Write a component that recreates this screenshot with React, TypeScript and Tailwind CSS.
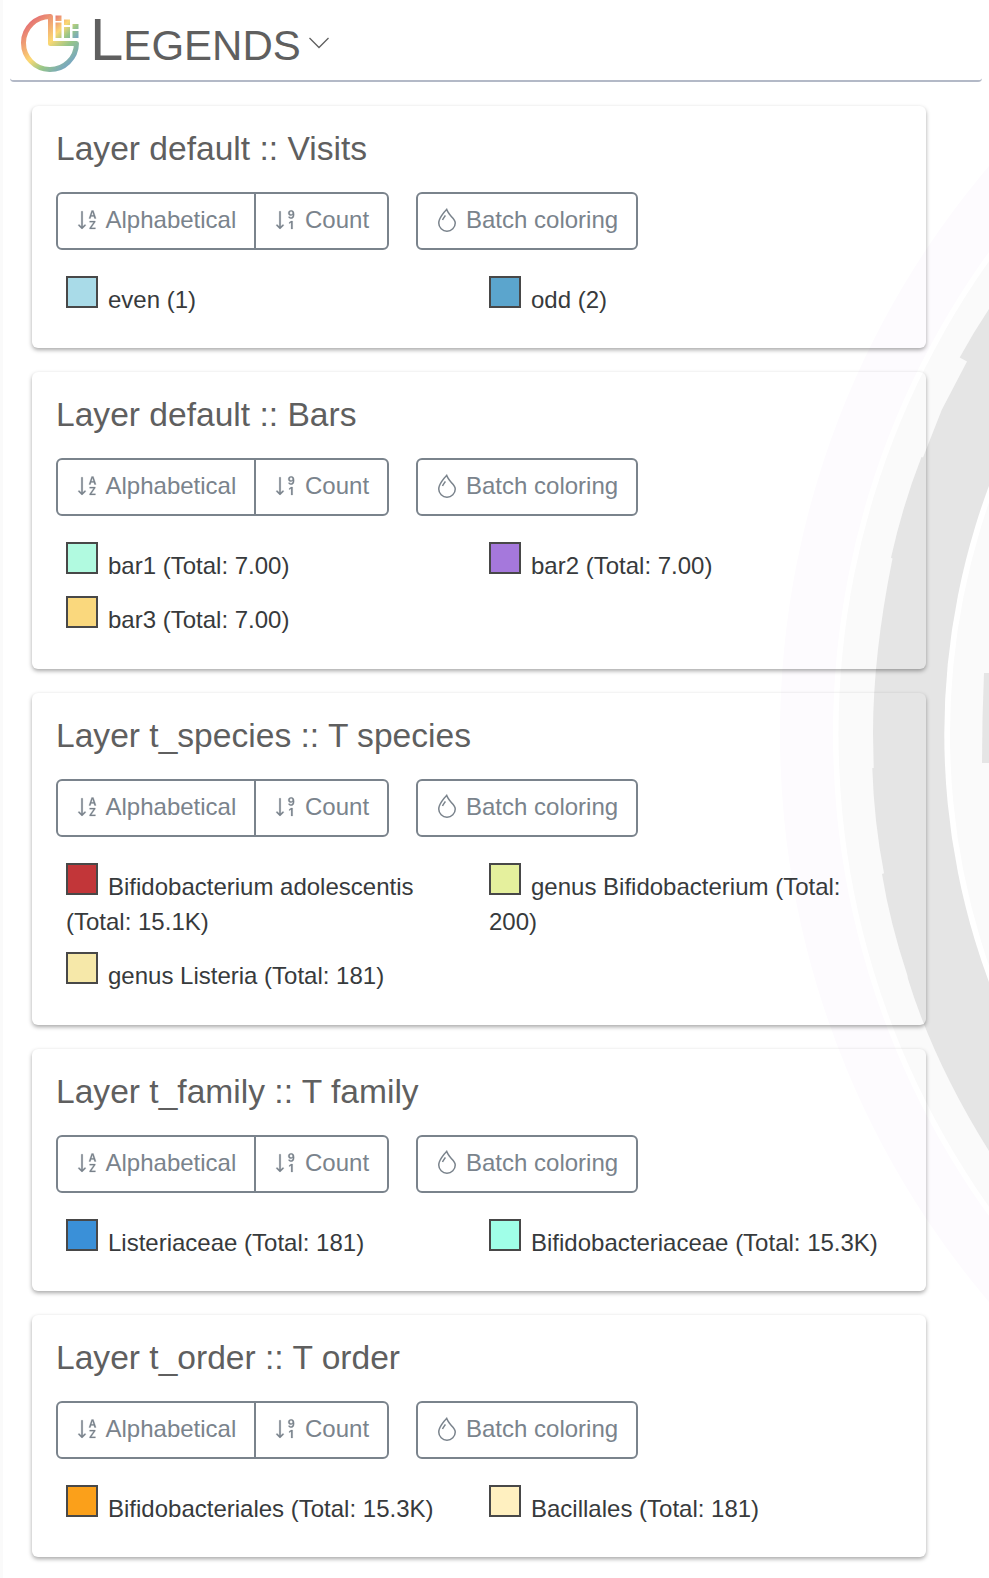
import React from "react";
import { BsSortAlphaDown, BsSortNumericDownAlt, BsDroplet } from "react-icons/bs";

type Entry = { label: string; color: string };
type Layer = { title: string; entries: Entry[] };

const layers: Layer[] = [
  {
    title: "Layer default :: Visits",
    entries: [
      { label: "even (1)", color: "bg-[#a9dbe8]" },
      { label: "odd (2)", color: "bg-[#5ba5cd]" },
    ],
  },
  {
    title: "Layer default :: Bars",
    entries: [
      { label: "bar1 (Total: 7.00)", color: "bg-[#b1fae0]" },
      { label: "bar2 (Total: 7.00)", color: "bg-[#a578dc]" },
      { label: "bar3 (Total: 7.00)", color: "bg-[#fad87d]" },
    ],
  },
  {
    title: "Layer t_species :: T species",
    entries: [
      { label: "Bifidobacterium adolescentis (Total: 15.1K)", color: "bg-[#c23639]" },
      { label: "genus Bifidobacterium (Total: 200)", color: "bg-[#e5f09d]" },
      { label: "genus Listeria (Total: 181)", color: "bg-[#f6e8a9]" },
    ],
  },
  {
    title: "Layer t_family :: T family",
    entries: [
      { label: "Listeriaceae (Total: 181)", color: "bg-[#3a90d8]" },
      { label: "Bifidobacteriaceae (Total: 15.3K)", color: "bg-[#a0ffe8]" },
    ],
  },
  {
    title: "Layer t_order :: T order",
    entries: [
      { label: "Bifidobacteriales (Total: 15.3K)", color: "bg-[#fba01a]" },
      { label: "Bacillales (Total: 181)", color: "bg-[#fff0c0]" },
    ],
  },
];

function Backdrop() {
  return (
    <svg className="pointer-events-none absolute inset-0" width="989" height="1578" viewBox="0 0 989 1578">
      <circle cx="1656" cy="734" r="876" fill="#fdfbfe" />
      <circle cx="1656" cy="734" r="823" fill="#fff" />
      <circle cx="1656" cy="734" r="817.5" fill="#fafafa" />
      <path
        d="M989 309Q973 333 959.7 357.5L967 361.5L941.7 410L923 457.5L921.5 457Q903 504 891 557.7L892.5 558.5Q873 655 873 733L873.7 768H872.3Q874 822 884 873.3L882 874Q890 923 907.3 975L908 979Q934 1063 989 1151Z"
        fill="#e5e5e5"
      />
      <circle cx="1656" cy="734" r="711.7" fill="#fff" />
      <circle cx="1656" cy="734" r="706" fill="#fafafa" />
      <path d="M989 673H984Q982 718 982 763H989Z" fill="#e5e5e5" />
    </svg>
  );
}

function Logo() {
  return (
    <svg width="60" height="60" viewBox="0 0 60 60" fill="none">
      <defs>
        <linearGradient id="logo" gradientUnits="userSpaceOnUse" x1="10" y1="8" x2="48" y2="50">
          <stop offset="0" stopColor="#e57373" />
          <stop offset="0.5" stopColor="#fcd873" />
          <stop offset="0.75" stopColor="#97c688" />
          <stop offset="1" stopColor="#7aa9bd" />
        </linearGradient>
        <linearGradient id="bars" gradientUnits="userSpaceOnUse" x1="34" y1="2" x2="56" y2="24">
          <stop offset="0" stopColor="#e57373" />
          <stop offset="0.45" stopColor="#fcd873" />
          <stop offset="0.75" stopColor="#97c688" />
          <stop offset="1" stopColor="#7aa9bd" />
        </linearGradient>
      </defs>
      <path d="M29.500 3.500A26.500 26.500 0 1 0 55.500 30.500H29.500Z" stroke="url(#logo)" strokeWidth="5" strokeLinejoin="round" />
      <path d="M34.500 2.500H40.500V8H34.500ZM34.500 9.500H40.500V25H34.500ZM43 6.500H49V12H43ZM43 14H49V25H43ZM51.500 11H57.500V16H51.500ZM51.500 18H57.500V25H51.500Z" fill="url(#bars)" />
    </svg>
  );
}

function LayerCard({ layer }: { layer: Layer }) {
  return (
    <section className="rounded-[6px] px-6 pt-[23px] pb-[26.4px] shadow-[0_2px_4px_rgba(0,0,0,0.35)]">
      <h2 className="text-[33.6px] leading-[40px] text-[#5f5f5f]">{layer.title}</h2>
      <div className="mt-[23px] flex h-[58px] gap-[27px] text-[24px] leading-[36px] text-[#7a838c]">
        <div className="flex w-[333px] rounded-[6px] border-2 border-[#7a838c]">
          <button className="flex w-[198px] items-center border-r-2 border-[#7a838c] pb-[2px] pl-[17.5px]">
            <BsSortAlphaDown size={24} className="mr-[6px]" stroke="currentColor" strokeWidth={0.15} />
            Alphabetical
          </button>
          <button className="flex flex-1 items-center pb-[2px] pl-[18px]">
            <BsSortNumericDownAlt size={24} className="mr-[7px]" stroke="currentColor" strokeWidth={0.15} />
            Count
          </button>
        </div>
        <button className="flex w-[222px] items-center rounded-[6px] border-2 border-[#7a838c] pb-[2px] pl-[17px]">
          <BsDroplet size={24} className="mr-[7px] mb-px" />
          Batch coloring
        </button>
      </div>
      <ul className="mt-[18px] grid grid-cols-2 text-[24px] leading-[35.5px] text-[#373a3c]">
        {layer.entries.map((e) => (
          <li key={e.label} className="px-[10px] pt-2 pb-[4.5px]">
            <span className={`mr-[10px] inline-block size-8 border-2 border-[#484848] ${e.color}`} />
            {e.label}
          </li>
        ))}
      </ul>
    </section>
  );
}

export default function App() {
  return (
    <div className="relative h-[1578px] w-[989px] overflow-hidden bg-white font-['Liberation_Sans',Arial,sans-serif]">
      <Backdrop />
      <main className="relative h-full border-l-[3px] border-[#fafafa] pl-[7px]">
        <header className="flex h-[82px] w-[972px] rounded-[4px] border-b-2 border-[#b3b9c7] pt-[13px] pl-[11px] text-[#5f5f5f]">
          <Logo />
          <h1 className="-mt-[3px] ml-[9px] text-[60px] leading-[60px] [font-variant-caps:small-caps]">Legends</h1>
          <svg className="mt-[23px] ml-[7px]" width="22" height="14" viewBox="0 0 22 14" fill="none" stroke="#5f5f5f" strokeWidth="1.3">
            <path d="M1.500 2L11 11.500L20.500 2" />
          </svg>
        </header>
        <div className="mt-6 ml-[22px] flex w-[894px] flex-col gap-6">
          {layers.map((layer) => (
            <LayerCard key={layer.title} layer={layer} />
          ))}
        </div>
      </main>
    </div>
  );
}
